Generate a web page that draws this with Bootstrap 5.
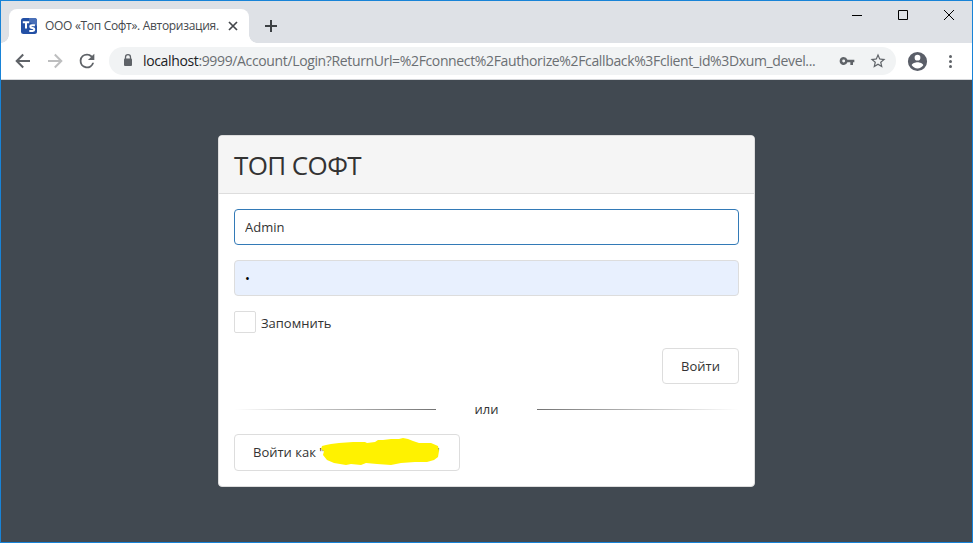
<!DOCTYPE html>
<html lang="ru">
<head>
<meta charset="utf-8">
<meta name="viewport" content="width=device-width, initial-scale=1">
<title>ООО «Топ Софт». Авторизация.</title>
<link href="https://cdn.jsdelivr.net/npm/bootstrap@5.3.0/dist/css/bootstrap.min.css" rel="stylesheet">
<style>
body { font-family: "Open Sans", "Noto Sans", sans-serif; font-size: 13px; line-height: 20px; color: #333; }
svg { display: block; flex: none; }
.browser { height: 543px; border: 1px solid #1883d7; background: #414951; }
.tab-strip { height: 42px; background: #dee1e6; padding-left: 8px; }
.browser-tab { width: 240px; height: 34px; margin-top: 8px; padding: 0 11px 0 12px; background: #fff; border-radius: 8px 8px 0 0; position: relative; }
.browser-tab::before, .browser-tab::after { content: ""; position: absolute; bottom: 0; width: 8px; height: 8px; }
.browser-tab::before { left: -8px; background: radial-gradient(circle at 0 0, transparent 7.5px, #fff 8px); }
.browser-tab::after { right: -8px; background: radial-gradient(circle at 100% 0, transparent 7.5px, #fff 8px); }
.tab-title { font-size: 12px; letter-spacing: -.31px; color: #45494d; margin-left: 8px; width: 179px; }
.new-tab { margin: 19px 0 0 16px; }
.win-buttons { margin: 8px 17px 0 0; gap: 34px; }
.toolbar { height: 37px; background: #fff; border-bottom: 1px solid #d5d7da; padding: 0 13px 0 13px; }
.forward { margin-left: 14px; }
.reload { margin-left: 12px; }
.address { width: 787px; height: 28px; background: #f1f3f4; border-radius: 14px; margin-left: 11px; padding: 0 9px 0 12px; }
.url { font-size: 14px; letter-spacing: -.36px; color: #6b6f73; margin-left: 8px; width: 690px; }
.url b { font-weight: 400; color: #202124; }
.bookmark { margin-left: 14px; }
.avatar { margin-left: 10px; }
.page { height: 463px; padding-top: 55px; }
.login-card { width: 537px; height: 352px; border: 1px solid #ddd; border-radius: 4px; }
.login-head { height: 58px; background: #f5f5f5; border-bottom: 1px solid #ddd; padding: 3px 15px 0; border-radius: 3px 3px 0 0; }
.login-head h1 { font-size: 26px; letter-spacing: -.6px; font-weight: 400; }
.login-body { padding: 15px; }
.field { height: 36px; border: 1px solid #ddd; border-radius: 4px; padding: 0 10px; font-size: 13px; color: #333; margin-bottom: 15px; }
.field:first-child { border-color: #337ab7; }
.field.filled { background: #e8f0fe; }
.remember { height: 22px; gap: 5px; margin-bottom: 15px; }
.remember-text { padding-top: 2px; }
.tick { width: 22px; height: 22px; border: 1px solid #ddd; border-radius: 2px; }
.plain-btn { --bs-btn-color: #333; --bs-btn-bg: #fff; --bs-btn-border-color: #ddd; --bs-btn-font-size: 13px; --bs-btn-border-radius: 4px; height: 36px; width: 77px; padding: 2px 0 0; }
.or-row { height: 20px; margin: 15px 0; }
.or-row span { width: 101px; }
.fade-line { height: 1px; width: 202px; background: linear-gradient(to right, rgba(0,0,0,0), rgba(0,0,0,.55)); }
.fade-line.flip { transform: scaleX(-1); }
.company-btn { width: 226px; height: 37px; padding: 0 0 0 18px; }
.scribble { margin: -1px -5px 0 -3px; z-index: 1; }
</style>
</head>
<body>
<div class="browser overflow-hidden">
  <div class="tab-strip d-flex align-items-start">
    <div class="browser-tab d-flex align-items-center">
      <svg width="16" height="16" viewBox="0 0 16 16"><rect width="16" height="16" rx="2.500" fill="#2350a5"/><path d="M8 0h5.500A2.500 2.500 0 0 1 16 2.500V8L8 4z" fill="#4a70b8"/><path d="M1.800 4.200h6.400M5 4.200v6.300" stroke="#fff" stroke-width="2" fill="none"/><path d="M13.900 7.200H11Q9.300 7.200 9.300 8.500T11.300 10t2 1.500T11.600 13H8.300" stroke="#fff" stroke-width="1.900" fill="none"/></svg>
      <span class="tab-title text-nowrap">ООО «Топ Софт». Авторизация.</span>
      <svg class="ms-auto" width="10" height="10" viewBox="0 0 10 10"><path d="M1 1l8 8M9 1L1 9" stroke="#44474b" stroke-width="1.700"/></svg>
    </div>
    <svg class="new-tab" width="12" height="12" viewBox="0 0 12 12"><path d="M6 0v12M0 6h12" stroke="#3c4043" stroke-width="2"/></svg>
    <div class="win-buttons d-flex ms-auto align-items-center">
      <svg width="12" height="12" viewBox="0 0 12 12"><path d="M1 6.500h10" stroke="#000"/></svg>
      <svg width="12" height="12" viewBox="0 0 12 12"><path d="M1.500 1.500h9v9h-9z" fill="none" stroke="#000"/></svg>
      <svg width="12" height="12" viewBox="0 0 12 12"><path d="M1 1l10 10M11 1L1 11" stroke="#000" stroke-width="1"/></svg>
    </div>
  </div>
  <div class="toolbar d-flex align-items-center">
    <svg width="18" height="18" viewBox="0 0 18 18"><path d="M16 9H3M9.200 2.500L2.700 9l6.500 6.500" fill="none" stroke="#5f6368" stroke-width="2"/></svg>
    <svg class="forward" width="18" height="18" viewBox="0 0 18 18"><path d="M2 9h13M8.800 2.500L15.300 9l-6.500 6.500" fill="none" stroke="#bdbebf" stroke-width="2"/></svg>
    <svg class="reload" width="22" height="22" viewBox="0 0 24 24"><path d="M17.650 6.350A7.960 7.960 0 0 0 12 4a8 8 0 1 0 7.730 10h-2.080A6 6 0 1 1 12 6c1.660 0 3.140.690 4.220 1.780L13 11h7V4z" fill="#5f6368"/></svg>
    <div class="address d-flex align-items-center">
      <svg width="14" height="16" viewBox="0 0 14 16"><path d="M4.500 7V4.200a2.500 2.500 0 0 1 5 0V7" fill="none" stroke="#5f6368" stroke-width="1.300"/><rect x="3" y="5.500" width="8" height="7.500" rx="1" fill="#5f6368"/></svg>
      <span class="url text-nowrap"><b>localhost</b>:9999/Account/Login?ReturnUrl=%2Fconnect%2Fauthorize%2Fcallback%3Fclient_id%3Dxum_devel...</span>
      <svg class="ms-auto" width="16" height="16" viewBox="0 0 24 24"><path d="M12.650 10A6 6 0 0 0 7 6a6 6 0 1 0 5.650 8H17v4h4v-4h2v-4zM7 14.200a2.200 2.200 0 1 1 0-4.400 2.200 2.200 0 0 1 0 4.400z" fill="#5f6368"/></svg>
      <svg class="bookmark" width="18" height="18" viewBox="0 0 24 24"><path d="M22 9.240l-7.190-.620L12 2 9.190 8.630 2 9.240l5.460 4.730L5.820 21 12 17.270 18.180 21l-1.630-7.030zM12 15.400l-3.760 2.270 1-4.280-3.320-2.880 4.380-.380L12 6.100l1.710 4.040 4.380.380-3.320 2.880 1 4.280z" fill="#5f6368"/></svg>
    </div>
    <svg class="avatar" width="23" height="23" viewBox="0 0 24 24"><path d="M12 2a10 10 0 1 0 0 20 10 10 0 0 0 0-20zm0 3a3 3 0 1 1 0 6 3 3 0 0 1 0-6zm0 14.200A7.200 7.200 0 0 1 6 15.980c.030-1.990 4-3.080 6-3.080s5.970 1.090 6 3.080a7.200 7.200 0 0 1-6 3.220z" fill="#5a5e68"/></svg>
    <svg class="ms-auto" width="18" height="18" viewBox="0 0 18 18"><g fill="#5f6368"><circle cx="9.500" cy="4.500" r="1.500"/><circle cx="9.500" cy="9.500" r="1.500"/><circle cx="9.500" cy="14.500" r="1.500"/></g></svg>
  </div>
  <main class="page">
    <section class="login-card bg-white mx-auto">
      <header class="login-head d-flex align-items-center"><h1 class="m-0">ТОП СОФТ</h1></header>
      <div class="login-body">
        <input class="form-control field" value="Admin" aria-label="Логин">
        <div class="field filled d-flex align-items-center text-black">•</div>
        <div class="remember d-flex align-items-center"><span class="tick"></span><span class="remember-text">Запомнить</span></div>
        <div class="d-flex justify-content-end"><button class="btn plain-btn">Войти</button></div>
        <div class="or-row d-flex align-items-center"><div class="fade-line"></div><span class="text-center">или</span><div class="fade-line flip"></div></div>
        <button class="btn plain-btn company-btn d-flex align-items-center"><span class="text-nowrap">Войти как "</span>
          <svg class="scribble" width="118" height="28" viewBox="0 0 118 28"><path d="M1 8L5 7 10 6 18 5 32 4 44 4 46 5 54 4 57 2 62 2 70 1 78 1 82 0 87 1 92 3 98 5 110 5 117 8 118 13 117 19 113 22 106 24 94 24 80 25 70 27 56 26 45 25 40 27 30 26 25 27 13 25 6 22 2 17 3 13 0 11z" fill="#fff200"/></svg><span>"</span></button>
      </div>
    </section>
  </main>
</div>
<script src="https://cdn.jsdelivr.net/npm/bootstrap@5.3.0/dist/js/bootstrap.bundle.min.js"></script>
</body>
</html>
